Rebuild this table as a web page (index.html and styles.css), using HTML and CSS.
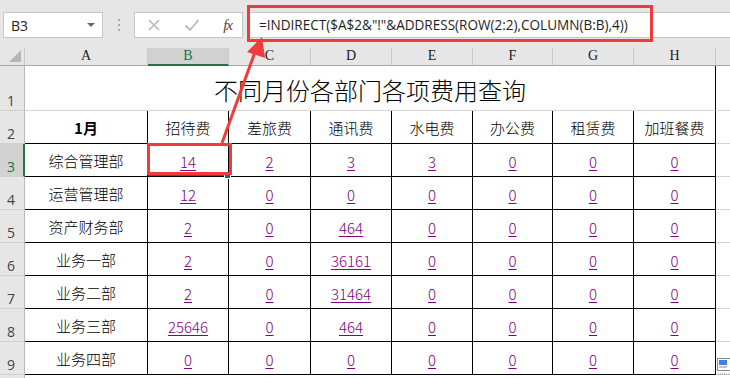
FILE: index.html
```html
<!DOCTYPE html>
<html>
<head>
<meta charset="utf-8">
<link rel="stylesheet" href="styles.css">
</head>
<body>
<div class="app">
  <div class="fbar">
    <div class="namebox"><span class="ref">B3</span><span class="dd"></span></div>
    <div class="grip"><i></i><i></i><i></i></div>
    <div class="btns">
      <svg class="ic" width="14" height="14" viewBox="0 0 14 14"><path d="M2 2L12 12M12 2L2 12" stroke="#b9b9b9" stroke-width="1.6" fill="none"/></svg>
      <svg class="ic" width="16" height="14" viewBox="0 0 16 14"><path d="M1.5 7.5L6 12L14.5 2" stroke="#b9b9b9" stroke-width="1.8" fill="none"/></svg>
      <span class="fx">fx</span>
    </div>
    <div class="formula">=INDIRECT($A$2&amp;"!"&amp;ADDRESS(ROW(2:2),COLUMN(B:B),4))</div>
  </div>

  <div class="sheet">
    <div class="corner"><svg width="12" height="12" viewBox="0 0 12 12"><path d="M12 0V12H0Z" fill="#b5b5b5"/></svg></div>
    <div class="ch">A</div>
    <div class="ch sel">B</div>
    <div class="ch">C</div>
    <div class="ch">D</div>
    <div class="ch">E</div>
    <div class="ch">F</div>
    <div class="ch">G</div>
    <div class="ch">H</div>
    <div class="ch last"></div>

    <div class="rh">1</div>
    <div class="title">不同月份各部门各项费用查询</div>
    <div class="gc"></div>

    <div class="rh">2</div>
    <div class="c hd bold">1月</div>
    <div class="c hd">招待费</div>
    <div class="c hd">差旅费</div>
    <div class="c hd">通讯费</div>
    <div class="c hd">水电费</div>
    <div class="c hd">办公费</div>
    <div class="c hd">租赁费</div>
    <div class="c hd">加班餐费</div>
    <div class="gc"></div>

    <div class="rh sel">3</div>
    <div class="c">综合管理部</div>
    <div class="c n active"><u>14</u></div>
    <div class="c n"><u>2</u></div>
    <div class="c n"><u>3</u></div>
    <div class="c n"><u>3</u></div>
    <div class="c n"><u>0</u></div>
    <div class="c n"><u>0</u></div>
    <div class="c n"><u>0</u></div>
    <div class="gc"></div>

    <div class="rh">4</div>
    <div class="c">运营管理部</div>
    <div class="c n"><u>12</u></div>
    <div class="c n"><u>0</u></div>
    <div class="c n"><u>0</u></div>
    <div class="c n"><u>0</u></div>
    <div class="c n"><u>0</u></div>
    <div class="c n"><u>0</u></div>
    <div class="c n"><u>0</u></div>
    <div class="gc"></div>

    <div class="rh">5</div>
    <div class="c">资产财务部</div>
    <div class="c n"><u>2</u></div>
    <div class="c n"><u>0</u></div>
    <div class="c n"><u>464</u></div>
    <div class="c n"><u>0</u></div>
    <div class="c n"><u>0</u></div>
    <div class="c n"><u>0</u></div>
    <div class="c n"><u>0</u></div>
    <div class="gc"></div>

    <div class="rh">6</div>
    <div class="c">业务一部</div>
    <div class="c n"><u>2</u></div>
    <div class="c n"><u>0</u></div>
    <div class="c n"><u>36161</u></div>
    <div class="c n"><u>0</u></div>
    <div class="c n"><u>0</u></div>
    <div class="c n"><u>0</u></div>
    <div class="c n"><u>0</u></div>
    <div class="gc"></div>

    <div class="rh">7</div>
    <div class="c">业务二部</div>
    <div class="c n"><u>2</u></div>
    <div class="c n"><u>0</u></div>
    <div class="c n"><u>31464</u></div>
    <div class="c n"><u>0</u></div>
    <div class="c n"><u>0</u></div>
    <div class="c n"><u>0</u></div>
    <div class="c n"><u>0</u></div>
    <div class="gc"></div>

    <div class="rh">8</div>
    <div class="c">业务三部</div>
    <div class="c n"><u>25646</u></div>
    <div class="c n"><u>0</u></div>
    <div class="c n"><u>464</u></div>
    <div class="c n"><u>0</u></div>
    <div class="c n"><u>0</u></div>
    <div class="c n"><u>0</u></div>
    <div class="c n"><u>0</u></div>
    <div class="gc"></div>

    <div class="rh">9</div>
    <div class="c">业务四部</div>
    <div class="c n"><u>0</u></div>
    <div class="c n"><u>0</u></div>
    <div class="c n"><u>0</u></div>
    <div class="c n"><u>0</u></div>
    <div class="c n"><u>0</u></div>
    <div class="c n"><u>0</u></div>
    <div class="c n"><u>0</u></div>
    <div class="gc"></div>

    <div class="rh"></div>
    <div class="gc"></div><div class="gc"></div><div class="gc"></div><div class="gc"></div><div class="gc"></div><div class="gc"></div><div class="gc"></div><div class="gc"></div><div class="gc"></div>
  </div>

  <div class="redbox"></div>
  <div class="cellbox"></div>
  <svg class="arrow" width="730" height="378" viewBox="0 0 730 378">
    <path d="M222 143L255 52" stroke="#f03a3c" stroke-width="3" fill="none"/>
    <path d="M262 37L265 58L247 52Z" fill="#f03a3c"/>
  </svg>
  <svg class="paste" width="14" height="20" viewBox="0 0 14 20">
    <rect x="0.5" y="0.5" width="13" height="12" fill="#fff" stroke="#8a8a8a"/>
    <rect x="2" y="2" width="8" height="5" fill="#3b82e6"/>
    <path d="M2 9H10" stroke="#8a8a8a"/>
    <path d="M1 16H13" stroke="#8a8a8a" stroke-dasharray="1 1"/>
  </svg>
</div>
</body>
</html>
```

FILE: styles.css
```css
* { box-sizing: border-box; }
html, body { margin: 0; padding: 0; }
body { width: 730px; height: 378px; overflow: hidden; background: #fff; }
.app { position: relative; width: 730px; height: 378px; overflow: hidden; }

.fbar {
  height: 48px;
  background: #e6e6e6;
  display: flex;
  align-items: flex-start;
  padding-top: 12px;
  padding-left: 3px;
}
.namebox {
  width: 100px; height: 26px;
  background: #fff;
  border: 1px solid #c6c6c6;
  display: flex; align-items: center; justify-content: space-between;
  padding: 0 7px 0 7px;
  font-family: "Open Sans", "Liberation Sans", sans-serif;
  font-size: 14px; color: #222;
}
.dd { width: 0; height: 0; border-left: 4px solid transparent; border-right: 4px solid transparent; border-top: 4px solid #666; }
.grip { width: 31px; height: 26px; display: flex; flex-direction: column; align-items: center; justify-content: center; gap: 3px; }
.grip i { display: block; width: 2px; height: 2px; background: #a8a8a8; }
.btns {
  width: 109px; height: 26px; background: #fff; border: 1px solid #c6c6c6;
  display: flex; align-items: center; justify-content: space-between;
  padding: 0 10px 0 12px;
}
.fx { font-family: "Liberation Serif", serif; font-style: italic; font-size: 15px; color: #444; letter-spacing: -1px; }
.formula {
  flex: 1; height: 26px; margin-left: 5px; margin-right: -4px;
  background: #fff; border: 1px solid #c6c6c6;
  font-family: "Open Sans", "Liberation Sans", sans-serif;
  font-size: 13.55px; color: #1e1e1e;
  line-height: 24px; padding-left: 10px; white-space: nowrap;
}

.sheet {
  display: grid;
  grid-template-columns: 25px 123px 81px 82px 81px 81px 80px 81px 82px 1fr;
  grid-template-rows: 18px 45px repeat(8, 33px) 33px;
}
.corner { background: #e6e6e6; border-right: 1px solid #c8c8c8; border-bottom: 1px solid #a8a8a8; display: flex; align-items: flex-end; justify-content: flex-end; padding: 0 3px 3px 0; }
.ch {
  background: #e6e6e6; border-right: 1px solid #c8c8c8; border-bottom: 1px solid #a8a8a8;
  font-family: "Liberation Serif", serif; font-size: 14px; color: #222;
  display: flex; align-items: flex-end; justify-content: center; padding-bottom: 1px;
}
.ch.sel { background: #d2d2d2; color: #217346; border-bottom: 2px solid #217346; padding-bottom: 0; }
.ch.last { border-right: none; }
.rh {
  background: #e6e6e6; border-right: 1px solid #b8b8b8; border-bottom: 1px solid #d0d0d0;
  font-family: "Open Sans", "Liberation Sans", sans-serif; font-size: 14px; color: #444;
  display: flex; align-items: flex-end; padding: 0 0 0 7px;
}
.rh.sel { background: #d2d2d2; color: #217346; border-right: 2px solid #217346; }
.title {
  grid-column: 2 / span 8;
  border-right: 1px solid #000; border-bottom: 1px solid #d4d4d4;
  display: flex; align-items: center; justify-content: center;
  font-family: "Noto Sans CJK SC", sans-serif; font-size: 24px; color: #000; font-weight: 300;
  padding-top: 2px;
}
.gc { border-bottom: 1px solid #d4d4d4; }
.c {
  border-right: 1px solid #000; border-bottom: 1px solid #000;
  display: flex; align-items: center; justify-content: center;
  font-family: "Noto Sans CJK SC", sans-serif; font-size: 15px; color: #000; font-weight: 300;
}
.c.bold { font-weight: 700; }
.c.n { font-family: "Noto Sans CJK SC", sans-serif; font-size: 15px; color: #800080; font-weight: 300; padding-top: 2px; }
.c.n u { text-underline-offset: 2px; }
.c.active { box-shadow: inset 0 -2px 0 #217346; position: relative; }
.c.active::after { content: ""; position: absolute; right: -3px; bottom: -3px; width: 5px; height: 5px; background: #217346; border: 1px solid #fff; }

.redbox { position: absolute; left: 247px; top: 5px; width: 406px; height: 37px; border: 3px solid #f03a3c; }
.cellbox { position: absolute; left: 147px; top: 143px; width: 85px; height: 32px; border: 3px solid #f03a3c; }
.arrow { position: absolute; left: 0; top: 0; pointer-events: none; }
.paste { position: absolute; left: 717px; top: 358px; }
```
